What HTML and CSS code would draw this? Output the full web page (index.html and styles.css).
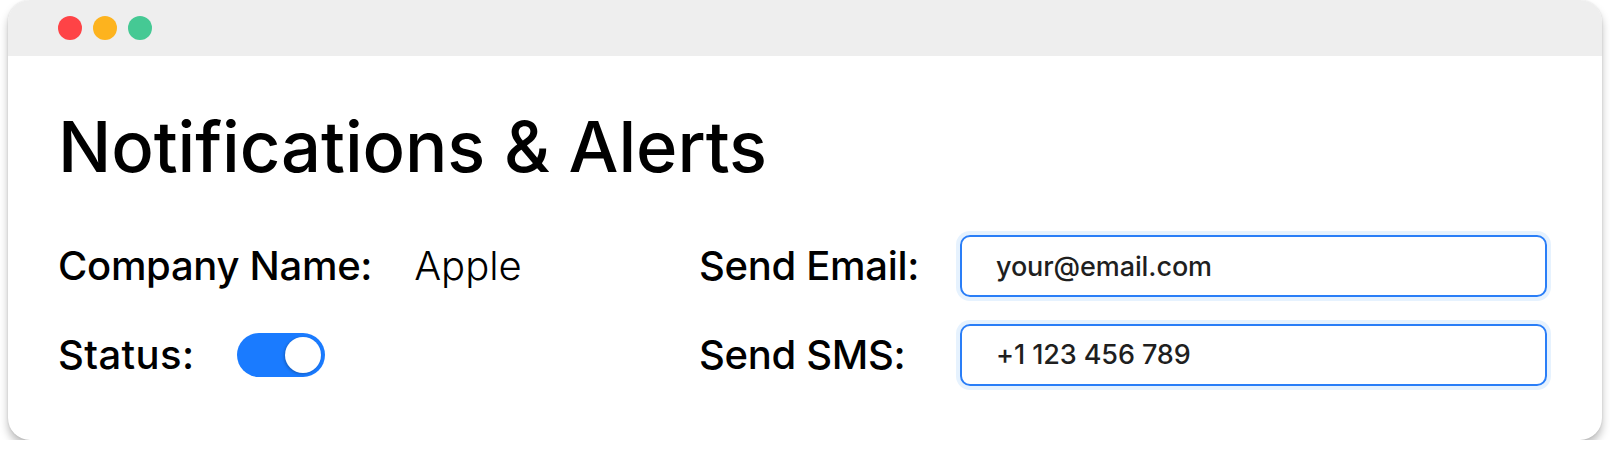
FILE: index.html
```html
<!DOCTYPE html>
<html lang="en">
<head>
<meta charset="utf-8">
<title>Notifications &amp; Alerts</title>
<link rel="stylesheet" href="styles.css">
</head>
<body>
<div class="window">
  <div class="titlebar">
    <span class="dot dot-red"></span>
    <span class="dot dot-yellow"></span>
    <span class="dot dot-green"></span>
  </div>
  <div class="content">
    <h1 class="title">Notifications &amp; Alerts</h1>
    <div class="form">
      <div class="col col-left">
        <div class="row">
          <span class="label">Company Name:</span>
          <span class="value">Apple</span>
        </div>
        <div class="row row-status">
          <span class="label">Status:</span>
          <span class="toggle"><span class="knob"></span></span>
        </div>
      </div>
      <div class="col col-right">
        <span class="label">Send Email:</span>
        <div class="input"><span class="input-text">your@email.com</span></div>
        <span class="label">Send SMS:</span>
        <div class="input"><span class="input-text">+1 123 456 789</span></div>
      </div>
    </div>
  </div>
</div>
</body>
</html>
```

FILE: styles.css
```css
* { box-sizing: border-box; }

html, body {
  margin: 0;
  padding: 0;
  background: #ffffff;
}

body {
  padding: 0 8px;
  font-family: "Inter", "Liberation Sans", sans-serif;
  color: #000;
}

.window {
  width: 1594px;
  height: 440px;
  border-radius: 22px;
  background: #ffffff;
  box-shadow: 0 6px 9px rgba(0, 0, 0, 0.26), 0 0 2px rgba(0, 0, 0, 0.12);
  overflow: hidden;
  display: flex;
  flex-direction: column;
}

.titlebar {
  height: 56px;
  background: #eeeeee;
  display: flex;
  align-items: center;
  gap: 11px;
  padding-left: 50px;
  padding-bottom: 1px;
}

.dot {
  width: 24px;
  height: 24px;
  border-radius: 50%;
  display: block;
}
.dot-red { background: #fe4346; }
.dot-yellow { background: #fdb31e; }
.dot-green { background: #45c994; }

.content {
  padding: 49px 55px 0 50px;
}

.title {
  margin: 0;
  font-size: 70.5px;
  line-height: 84px;
  font-weight: 500;
  letter-spacing: -0.1px;
}

.form {
  margin-top: 46px;
  display: flex;
}

.col-left {
  width: 641px;
  display: flex;
  flex-direction: column;
  gap: 27px;
}

.row {
  height: 62px;
  display: flex;
  align-items: center;
  gap: 42px;
}

.row-status .label {
  letter-spacing: 0.4px;
}

.label {
  font-size: 40px;
  font-weight: 500;
  line-height: 62px;
  letter-spacing: -0.3px;
  white-space: nowrap;
}

.value {
  font-size: 40px;
  font-weight: 300;
  line-height: 62px;
}

.toggle {
  width: 88px;
  height: 44px;
  border-radius: 22px;
  background: #1a7bff;
  display: flex;
  align-items: center;
  justify-content: flex-end;
  padding-right: 4px;
}

.knob {
  width: 36px;
  height: 36px;
  border-radius: 50%;
  background: #ffffff;
  box-shadow: -1px 1px 3px rgba(0, 0, 0, 0.25);
}

.col-right {
  flex: 1;
  display: grid;
  grid-template-columns: 261px 1fr;
  row-gap: 26px;
  align-items: center;
}

.input {
  height: 62px;
  border: 2px solid #2a7ef7;
  border-radius: 10px;
  box-shadow: 0 0 0 4px #e6f2fe;
  display: flex;
  align-items: center;
  padding-left: 34px;
}

.input-text {
  font-size: 27px;
  font-weight: 500;
  color: #1f1f1f;
  letter-spacing: -0.1px;
}
```
